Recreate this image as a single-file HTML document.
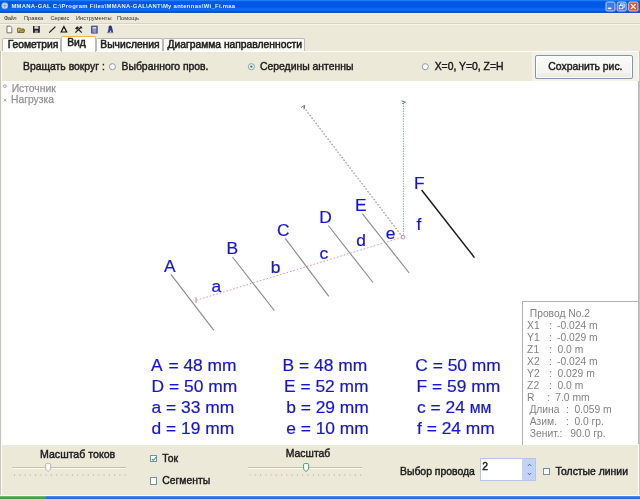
<!DOCTYPE html>
<html><head><meta charset="utf-8">
<style>
*{margin:0;padding:0;box-sizing:border-box}
html,body{width:640px;height:499px;overflow:hidden;background:#ece9d8;font-family:"Liberation Sans",sans-serif;}
.abs{position:absolute}
#win{position:absolute;left:0;top:0;width:640px;height:499px;background:#ece9d8;overflow:hidden;will-change:transform}
#title{position:absolute;left:0;top:0;width:640px;height:12.6px;background:linear-gradient(#3090ff 0,#1068ee 1px,#0058e6 2px,#0058e6 7px,#0a6af6 9px,#0a68f4 10.4px,#1a50b8 11.6px,#1c50b4 12.6px);}
#title .t{position:absolute;left:11.4px;top:1.4px;font-size:5.9px;font-weight:bold;color:#eef3ff;white-space:nowrap;line-height:10px;letter-spacing:0.29px}
#menu{position:absolute;left:0;top:12.5px;width:640px;height:10px;}
#menu span{position:absolute;top:1px;font-size:5.7px;line-height:8px;color:#333;white-space:nowrap}
.tab{position:absolute;top:38px;height:13px;background:#fbfbf8;border:1px solid #b9bcb4;border-bottom:none;border-radius:2px 2px 0 0;font-size:10.3px;line-height:12px;color:#111;text-align:center;white-space:nowrap;-webkit-text-stroke:0.5px #222}
.tab.sel{top:36px;height:16px;background:#fdfdfb;border-top:1.5px solid #f2b04a;line-height:12.5px;z-index:3}
#panel{position:absolute;left:0;top:51px;width:640px;height:445px;border-top:1px solid #fff;background:#ece9d8}
#canvas{position:absolute;left:2px;top:80.5px;width:636px;height:364px;background:#fff}
.rl{position:absolute;font-size:10.4px;line-height:12px;color:#111;white-space:nowrap;-webkit-text-stroke:0.42px #222}
.radio{position:absolute;width:7px;height:7px;border-radius:50%;border:1px solid #7a8aa0;background:#fff}
.radio.on::after{content:"";position:absolute;left:1.5px;top:1.5px;width:2px;height:2px;border-radius:50%;background:#2a9a2a}
.btn{position:absolute;left:535px;top:54.8px;width:98.2px;height:24.2px;border:1px solid #8494ac;border-radius:2px;background:linear-gradient(#fbfbfa,#f3f3ef 75%,#e6e5dc);box-shadow:inset 0 0 0 1px #fdfdfc;font-size:10.4px;line-height:22.6px;text-align:center;color:#111;padding-left:2.6px;-webkit-text-stroke:0.42px #222}
.big{position:absolute;font-size:17.4px;line-height:20px;color:#1414d8;white-space:nowrap;-webkit-text-stroke:0.2px #1414d8}
.lab{position:absolute;font-size:17.4px;line-height:20px;color:#1414d8;white-space:nowrap;-webkit-text-stroke:0.2px #1414d8}
.leg{position:absolute;font-size:10.3px;line-height:12px;color:#8e8e8e;white-space:nowrap;-webkit-text-stroke:0.25px #999}
#info{position:absolute;left:522px;top:301px;width:116px;height:143.5px;background:#fff;border-left:1px solid #b0b0b0;border-top:1px solid #b0b0b0}
#info div{position:absolute;font-size:10.3px;line-height:12px;color:#828282;white-space:pre;margin-top:1.1px}
.chk{position:absolute;width:7.2px;height:7.2px;border:1px solid #7090a4;background:#fdfdfb}
.track{position:absolute;height:2px;border-top:1px solid #c4c1b2;border-bottom:1px solid #faf9f2}
.thumb{position:absolute;width:5.4px;height:8.6px;border:1px solid #b0b4b0;border-radius:1.5px 1.5px 3px 3px;background:#f8f8f4}
.ticks{position:absolute;height:2px;background:repeating-linear-gradient(90deg,#c4c1b2 0,#c4c1b2 1px,transparent 1px,transparent 6px)}
</style></head><body>
<div id="win">
<div id="title">
 <svg class="abs" style="left:1.2px;top:2px" width="7.6" height="7.6" viewBox="0 0 10 10"><circle cx="5" cy="5" r="4.3" fill="#dfe9f8" stroke="#5a7fc0" stroke-width="0.8"/><path d="M2 5h6M5 1.5v7" stroke="#4a70b8" stroke-width="0.8"/></svg>
 <div class="t">MMANA-GAL C:\Program Files\MMANA-GAL\ANT\My antennas\Wi_Fi.maa</div>
 <svg class="abs" style="left:604px;top:0px" width="36" height="12" viewBox="0 0 36 12">
  <rect x="2" y="2" width="9" height="9" rx="1.5" fill="#3f7be8" stroke="#dfe8fb" stroke-width="0.8"/><rect x="3.8" y="7.6" width="3.6" height="1.5" fill="#fff"/>
  <rect x="13.2" y="2" width="9" height="9" rx="1.5" fill="#3f7be8" stroke="#dfe8fb" stroke-width="0.8"/><rect x="16.6" y="4" width="3.6" height="3.2" fill="none" stroke="#fff" stroke-width="0.8"/><rect x="15.2" y="5.6" width="3.6" height="3.2" fill="#3f7be8" stroke="#fff" stroke-width="0.8"/>
  <rect x="24.6" y="2" width="9.4" height="9" rx="1.5" fill="#dc5a32" stroke="#f4dcd0" stroke-width="0.8"/><path d="M27 4.2l4.6 4.6M31.6 4.2l-4.6 4.6" stroke="#fff" stroke-width="1.2"/>
 </svg>
</div>
<div class="abs" style="left:0;top:12.6px;width:640px;height:1.2px;background:#e8eefa"></div>
<div id="menu">
 <span style="left:4px;letter-spacing:-0.5px">Файл</span><span style="left:24px">Правка</span><span style="left:50.5px;letter-spacing:-0.15px">Сервис</span><span style="left:76px">Инструменты</span><span style="left:117px">Помощь</span>
</div>
<div class="abs" style="left:0;top:23px;width:640px;height:1px;background:#d8d4c4"></div>
<div class="abs" style="left:0;top:24px;width:640px;height:1px;background:#f6f4ea"></div>
<svg class="abs" style="left:0;top:24px" width="130" height="13" viewBox="0 0 130 13">
 <path d="M7 2.2h3.4l1.4 1.4v5.2h-4.8z" fill="#fff" stroke="#555" stroke-width="0.8"/>
 <path d="M17.6 4.2h2.6l.8.8h3v3.4h-6.4z" fill="#d8c860" stroke="#5a5020" stroke-width="0.8"/><path d="M18.6 8.4l1.3-2.4h4.9l-1.3 2.4z" fill="#b8a840" stroke="#5a5020" stroke-width="0.6"/>
 <rect x="33" y="2" width="6.8" height="6.8" fill="#222"/><rect x="34.4" y="2.2" width="4" height="2.6" fill="#d8d8d8"/><rect x="34.8" y="6.4" width="3.2" height="2.4" fill="#999"/>
 <path d="M49.2 8.6l6.2-6" stroke="#111" stroke-width="1.2"/>
 <path d="M61.1 8l2.8-5.4 2.8 5.4z" fill="none" stroke="#111" stroke-width="1.2"/>
 <path d="M75.4 8.6l5.8-5.6M81.8 8.6l-4.6-4.4" stroke="#222" stroke-width="1.3"/><path d="M75 4.4l2.2-2.2 1.8 1.3-2.2 2.3z" fill="#222"/><path d="M79.4 2.4l2.2 0 .9 1.8-1.8.4z" fill="#222"/>
 <rect x="91.6" y="2.1" width="5.6" height="7" fill="#7078b0" stroke="#333a70" stroke-width="0.8"/><rect x="92.7" y="3.1" width="3.4" height="1.5" fill="#dfe4f4"/><path d="M92.8 5.8h3.2M92.8 7h3.2M92.8 8.2h3.2" stroke="#d0d4ec" stroke-width="0.6" stroke-dasharray="0.8 0.4"/>
 <path d="M108.6 2.6l1.8-.8 1.4.8.7 2.6.7 3.4h-1.8l-.7-2.5-1.1 2.5h-2l.9-3.6z" fill="#2a3aa0"/><circle cx="110.2" cy="2.8" r="1.2" fill="#334"/><path d="M106.8 8.7h6.6" stroke="#777" stroke-width="0.7"/>
</svg>
<div class="tab" style="left:2px;width:59px;padding-left:3px">Геометрия</div>
<div class="tab sel" style="left:61px;width:35px;padding-right:4px">Вид</div>
<div class="tab" style="left:96px;width:67px;padding-left:1px">Вычисления</div>
<div class="tab" style="left:163px;width:142px;padding-left:1.5px">Диаграмма направленности</div>
<div id="panel"></div>
<div class="rl" style="left:23px;top:61.1px">Вращать вокруг :</div>
<div class="rl" style="left:121.5px;top:61.1px">Выбранного пров.</div>
<div class="rl" style="left:260px;top:61.1px">Середины антенны</div>
<div class="rl" style="left:434.7px;top:61.1px">X=0, Y=0, Z=H</div>
<div class="abs" style="left:532px;top:52px;width:106px;height:29px;background:#f3f2ea"></div>
<div class="abs" style="left:0;top:51px;width:1px;height:445px;background:#c8c5b8"></div>
<div class="abs" style="left:1px;top:51px;width:1px;height:445px;background:#fbfaf6"></div>
<div class="abs" style="left:638px;top:51px;width:1px;height:445px;background:#fbfaf6"></div>
<div class="abs" style="left:639px;top:51px;width:1px;height:445px;background:#c8c5b8"></div>
<div class="abs" style="left:638px;top:81px;width:1px;height:363px;background:#b8b8b8"></div>
<div class="abs" style="left:0;top:494.6px;width:640px;height:1px;background:#fbfaf6"></div>
<svg class="abs" style="left:100px;top:60px" width="340" height="14" viewBox="100 60 340 14">
 <circle cx="112.4" cy="66.7" r="3.05" fill="#fbfcfa" stroke="#8298ac" stroke-width="0.95"/>
 <circle cx="251.4" cy="66.7" r="3.05" fill="#f2f8f4" stroke="#78a09c" stroke-width="0.95"/><circle cx="251.4" cy="66.7" r="1.15" fill="#2f7868"/>
 <circle cx="425.3" cy="66.7" r="3.05" fill="#fbfcfa" stroke="#8298ac" stroke-width="0.95"/>
</svg>
<div class="btn">Сохранить рис.</div>
<div id="canvas"></div>
<svg class="abs" style="left:0;top:0" width="640" height="499" viewBox="0 0 640 499">
 <circle cx="4.9" cy="86.2" r="1.35" fill="none" stroke="#d86888" stroke-width="0.8"/>
 <path d="M3.7 99l2.6 2.4M6.3 99l-2.6 2.4" stroke="#a878a0" stroke-width="0.8"/>
 <g stroke="#8c8c8c" stroke-width="1.15" fill="none">
  <path d="M170.9 274.4L213.7 330.2"/>
  <path d="M232.5 257L274.3 310.5"/>
  <path d="M285.2 238.3L328.8 296.3"/>
  <path d="M328.3 225.5L373 282.5"/>
  <path d="M362.5 213.8L409.2 273"/>
 </g>
 <path d="M421.6 190L474.5 257.6" stroke="#1a1a1a" stroke-width="1.45"/>
 <path d="M196.3 300.3L402.5 237.2" stroke="#d596c8" stroke-width="1" stroke-dasharray="1.6 1.9" fill="none"/>
 <path d="M196 297.2v6" stroke="#cc80bc" stroke-width="1"/>
 <path d="M403.4 237V100" stroke="#8fae98" stroke-width="1" stroke-dasharray="1.4 1.1"/>
 <path d="M402.5 237L302.8 106" stroke="#97979c" stroke-width="1.2" stroke-dasharray="1.6 1.7"/>
 <path d="M401.5 100.8l4 1.4-3.2 1.4" stroke="#688878" stroke-width="1" fill="none"/>
 <path d="M301.2 107.5l3.6-2.2-.8 4" stroke="#70707c" stroke-width="1" fill="none"/>
 <circle cx="403.1" cy="237.1" r="1.8" fill="#fff" stroke="#e07090" stroke-width="0.9"/>
</svg>
<div class="leg" style="left:11.7px;top:82.5px">Источник</div>
<div class="leg" style="left:11px;top:94.3px">Нагрузка</div>
<div class="lab" style="left:164px;top:256.2px">A</div>
<div class="lab" style="left:226.5px;top:237.7px">B</div>
<div class="lab" style="left:277px;top:220.1px">C</div>
<div class="lab" style="left:319.2px;top:206.95px">D</div>
<div class="lab" style="left:355px;top:194.95px">E</div>
<div class="lab" style="left:414px;top:172.9px">F</div>
<div class="lab" style="left:211.4px;top:275.7px">a</div>
<div class="lab" style="left:270.75px;top:257.4px">b</div>
<div class="lab" style="left:319.5px;top:242.5px">c</div>
<div class="lab" style="left:356.2px;top:230.3px">d</div>
<div class="lab" style="left:385.8px;top:222.5px">e</div>
<div class="lab" style="left:416.5px;top:214.3px">f</div>

<div class="big" style="left:151px;top:354.6px">A<span style="margin-left:1px"> </span>= 48 mm</div>
<div class="big" style="left:282.6px;top:354.6px">B = 48 mm</div>
<div class="big" style="left:415.3px;top:354.6px">C = 50 mm</div>
<div class="big" style="left:151.6px;top:375.6px">D = 50 mm</div>
<div class="big" style="left:284px;top:375.6px">E = 52 mm</div>
<div class="big" style="left:416.6px;top:375.6px">F = 59 mm</div>
<div class="big" style="left:151.6px;top:396.6px">a = 33 mm</div>
<div class="big" style="left:286.2px;top:396.6px">b = 29 mm</div>
<div class="big" style="left:417px;top:396.6px">c = 24 <span style="font-size:15.8px">мм</span></div>
<div class="big" style="left:151.6px;top:417.7px">d = 19 mm</div>
<div class="big" style="left:286.2px;top:417.7px">e = 10 mm</div>
<div class="big" style="left:417px;top:417.7px">f = 24 mm</div>

<div id="info">
 <div style="left:6.75px;top:4.7px">Провод No.2</div>
 <div style="left:4.10px;top:16.7px">X1</div>
 <div style="left:26.00px;top:16.7px">:</div>
 <div style="left:34.00px;top:16.7px">-0.024 m</div>
 <div style="left:4.10px;top:28.7px">Y1</div>
 <div style="left:26.00px;top:28.7px">:</div>
 <div style="left:34.00px;top:28.7px">-0.029 m</div>
 <div style="left:4.10px;top:40.7px">Z1</div>
 <div style="left:26.00px;top:40.7px">:</div>
 <div style="left:34.50px;top:40.7px">0.0 m</div>
 <div style="left:4.10px;top:52.7px">X2</div>
 <div style="left:26.00px;top:52.7px">:</div>
 <div style="left:34.00px;top:52.7px">-0.024 m</div>
 <div style="left:4.10px;top:64.7px">Y2</div>
 <div style="left:26.00px;top:64.7px">:</div>
 <div style="left:34.50px;top:64.7px">0.029 m</div>
 <div style="left:4.10px;top:76.7px">Z2</div>
 <div style="left:26.00px;top:76.7px">:</div>
 <div style="left:34.50px;top:76.7px">0.0 m</div>
 <div style="left:4.10px;top:88.7px">R</div>
 <div style="left:24.30px;top:88.7px">:</div>
 <div style="left:32.25px;top:88.7px">7.0 mm</div>
 <div style="left:6.40px;top:100.7px">Длина</div>
 <div style="left:43.00px;top:100.7px">:</div>
 <div style="left:51.40px;top:100.7px">0.059 m</div>
 <div style="left:6.75px;top:112.7px">Азим.</div>
 <div style="left:43.00px;top:112.7px">:</div>
 <div style="left:51.40px;top:112.7px">0.0 гр.</div>
 <div style="left:6.75px;top:124.7px">Зенит.:</div>
 <div style="left:47.25px;top:124.7px">90.0 гр.</div>
</div>

<div class="rl" style="left:40px;top:448px;font-size:10.6px">Масштаб токов</div>
<div class="track" style="left:12px;top:466.5px;width:114px"></div>
<svg class="abs" style="left:0;top:474px" width="640" height="3" viewBox="0 0 640 3"><path d="M14.50 0v2M19.77 0v2M25.04 0v2M30.31 0v2M35.58 0v2M40.85 0v2M46.12 0v2M51.39 0v2M56.66 0v2M61.93 0v2M67.20 0v2M72.47 0v2M77.74 0v2M83.01 0v2M88.28 0v2M93.55 0v2M98.82 0v2M104.09 0v2M109.36 0v2M114.63 0v2M119.90 0v2M125.17 0v2" stroke="#cbc8ba" stroke-width="1"/></svg>
<svg class="abs" style="left:44.6px;top:463.2px" width="7" height="10" viewBox="0 0 7 10"><path d="M1.4 .6h3.4q.8 0 .8.8v4.6l-2.5 2.6-2.5-2.6v-4.6q0-.8.8-.8z" fill="#fafaf6" stroke="#aeb2ae" stroke-width="0.9"/></svg>
<div class="chk" style="left:149.8px;top:454.8px"></div>
<svg class="abs" style="left:150.8px;top:455.8px" width="6" height="6" viewBox="0 0 6 6"><path d="M0.8 2.8l1.6 1.7L5.2 1" stroke="#3a9a6a" stroke-width="1.1" fill="none"/></svg>
<div class="rl" style="left:162.3px;top:452.9px">Ток</div>
<div class="chk" style="left:149.8px;top:477.4px"></div>
<div class="rl" style="left:162.3px;top:475.4px">Сегменты</div>
<div class="rl" style="left:285.8px;top:447.8px">Масштаб</div>
<div class="track" style="left:248px;top:466.5px;width:114px"></div>
<svg class="abs" style="left:0;top:474px" width="640" height="3" viewBox="0 0 640 3"><path d="M250.00 0v2M255.27 0v2M260.54 0v2M265.81 0v2M271.08 0v2M276.35 0v2M281.62 0v2M286.89 0v2M292.16 0v2M297.43 0v2M302.70 0v2M307.97 0v2M313.24 0v2M318.51 0v2M323.78 0v2M329.05 0v2M334.32 0v2M339.59 0v2M344.86 0v2M350.13 0v2M355.40 0v2M360.67 0v2" stroke="#cbc8ba" stroke-width="1"/></svg>
<svg class="abs" style="left:303.1px;top:463.4px" width="7" height="10" viewBox="0 0 7 10"><path d="M1.4 .6h3.4q.8 0 .8.8v4.6l-2.5 2.6-2.5-2.6v-4.6q0-.8.8-.8z" fill="#fafaf6" stroke="#4f9a6c" stroke-width="1"/></svg>
<div class="rl" style="left:400px;top:466px">Выбор провода</div>
<div class="abs" style="left:480.3px;top:457.6px;width:55.8px;height:23.6px;border:1px solid #b4c6e4;background:#fff"></div>
<div class="rl" style="left:482.2px;top:460.6px">2</div>
<div class="abs" style="left:522.4px;top:458.6px;width:12.8px;height:21.6px;background:#c3d2f8;border-radius:1px"></div>
<svg class="abs" style="left:524px;top:459px" width="11" height="21" viewBox="0 0 11 21"><path d="M3.8 7l1.7-1.8L7.2 7M3.8 14l1.7 1.8L7.2 14" stroke="#4a60a0" stroke-width="0.9" fill="none"/></svg>
<div class="chk" style="left:543px;top:467.5px"></div>
<div class="rl" style="left:555.5px;top:465.5px">Толстые линии</div>

<div class="abs" style="left:0;top:495.6px;width:640px;height:4px;background:linear-gradient(#5a98f4,#2f6fe0 40%,#2a62d8)"></div>
<div class="abs" style="left:0;top:495.6px;width:45.6px;height:4px;background:linear-gradient(#7ec07e,#4aa04a 40%,#3a983a);border-radius:0 2px 0 0"></div>
</div>
</body></html>
